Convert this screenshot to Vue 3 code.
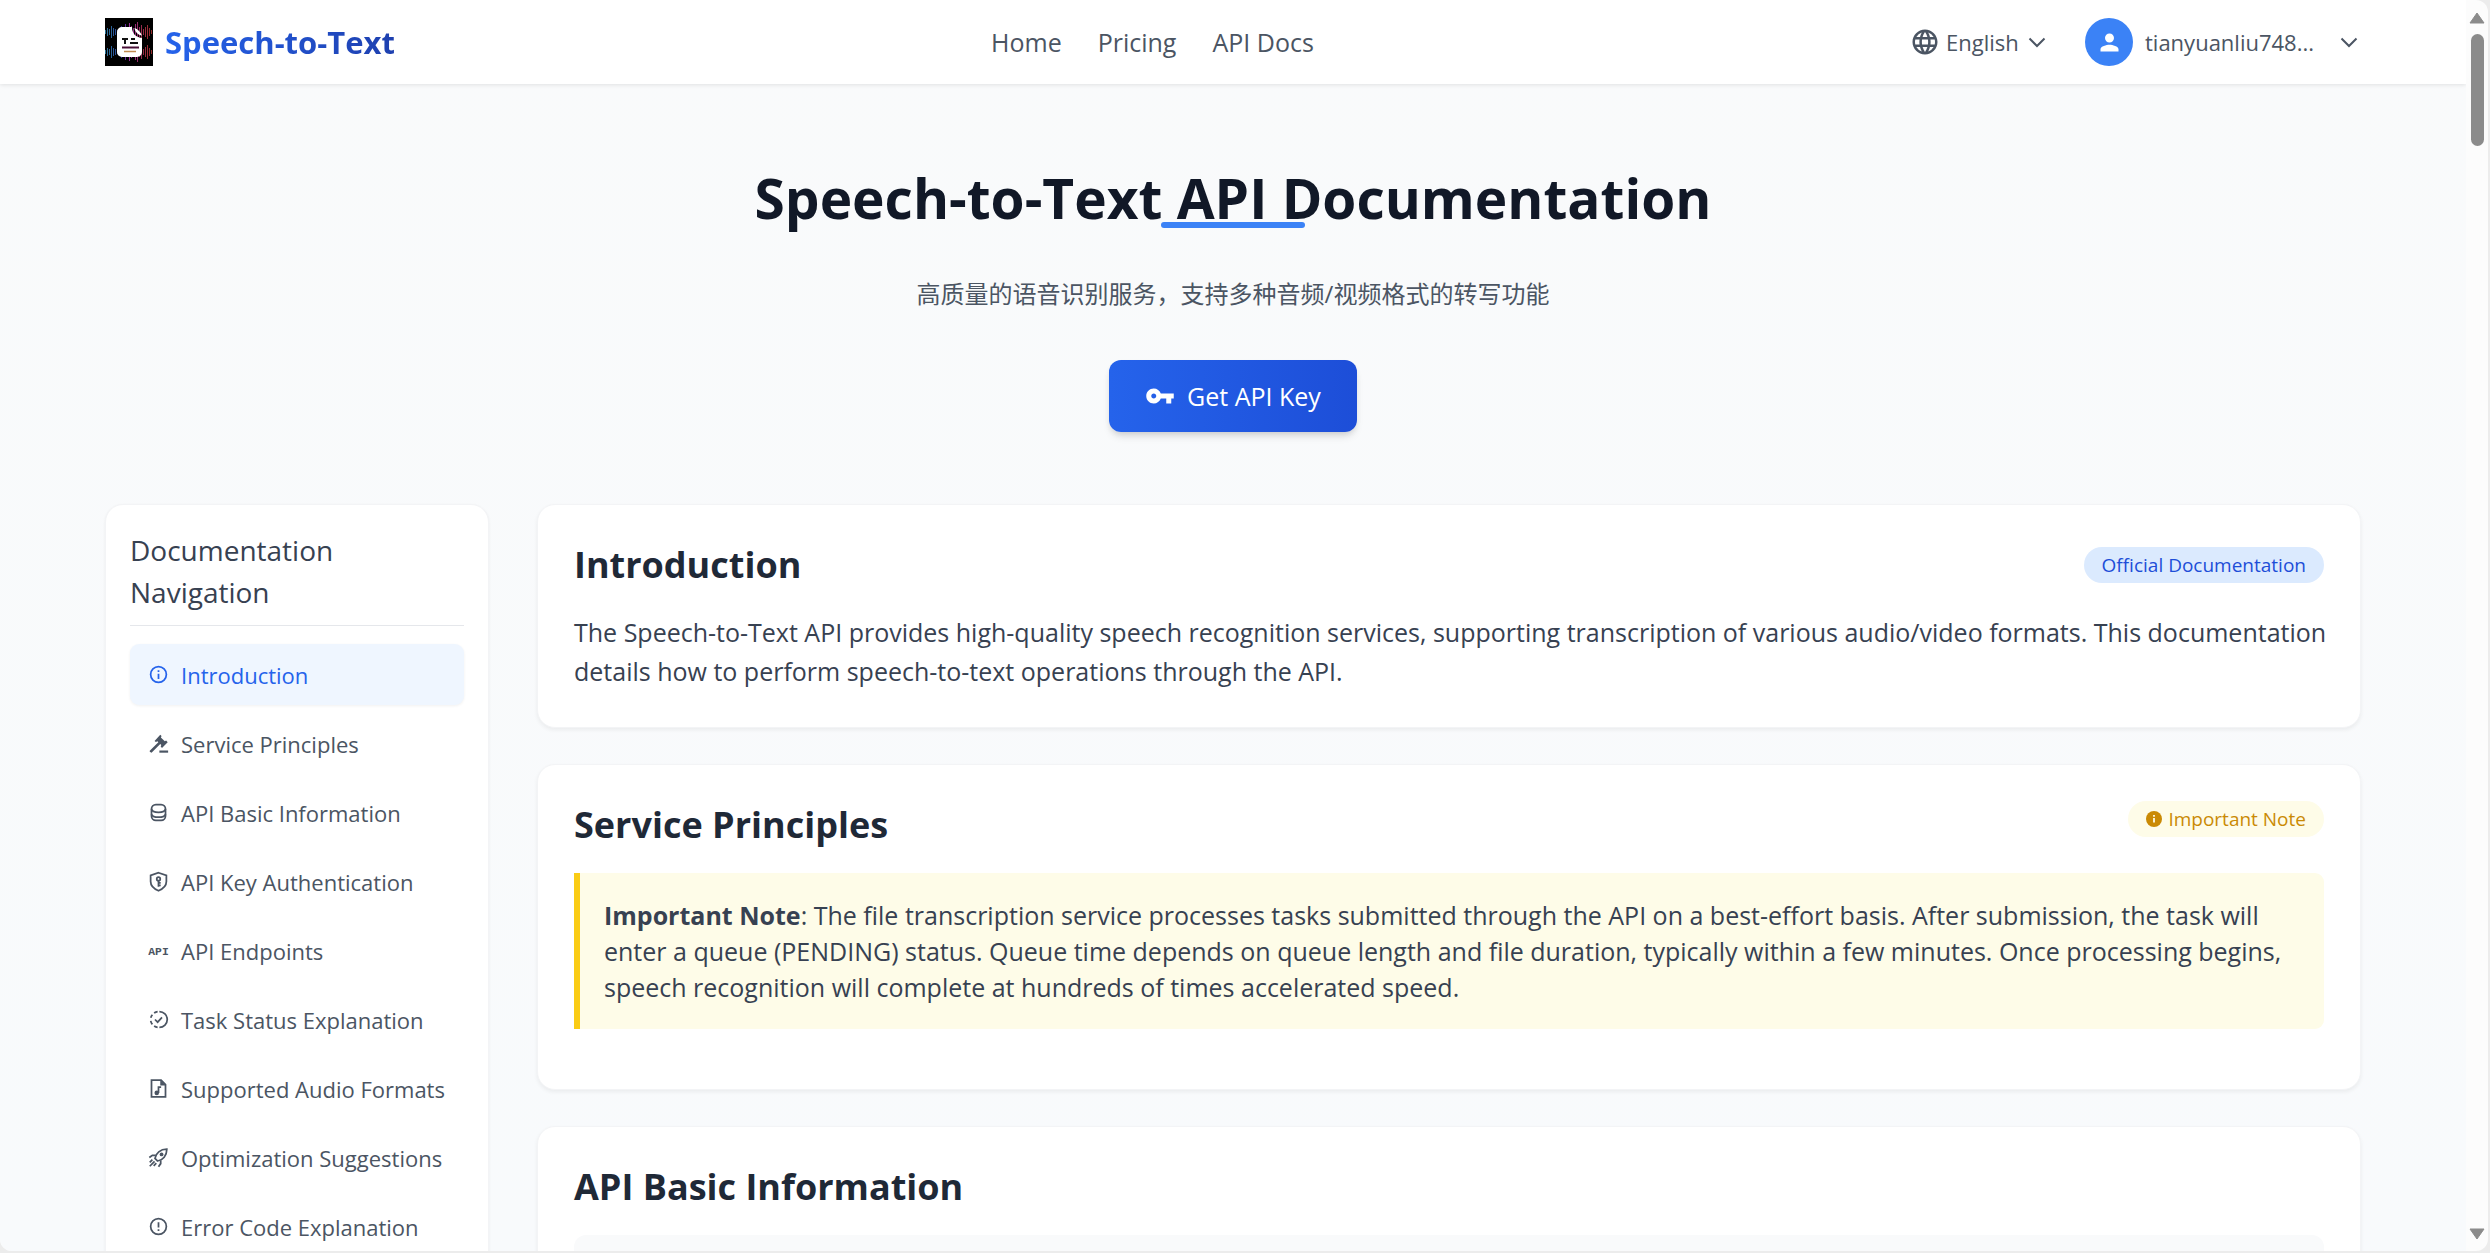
<script setup>
import { ref } from 'vue'

const active = ref('introduction')

const links = ['Home', 'Pricing', 'API Docs']

const sections = [
  { id: 'introduction', label: 'Introduction', icon: 'info' },
  { id: 'service-principles', label: 'Service Principles', icon: 'gavel' },
  { id: 'api-basic', label: 'API Basic Information', icon: 'database' },
  { id: 'api-key', label: 'API Key Authentication', icon: 'shield' },
  { id: 'api-endpoints', label: 'API Endpoints', icon: 'api' },
  { id: 'task-status', label: 'Task Status Explanation', icon: 'progress' },
  { id: 'audio-formats', label: 'Supported Audio Formats', icon: 'music' },
  { id: 'optimization', label: 'Optimization Suggestions', icon: 'rocket' },
  { id: 'error-codes', label: 'Error Code Explanation', icon: 'alert' }
]

// Waveform bars of the logo: two rows, blue at the left edge to red at the right edge
const heights = [2, 4, 3, 6, 4, 3, 2, 3, 6, 5, 8, 4, 9, 6, 4, 8, 10, 5, 7, 3, 5, 7, 4, 2]
const hues = [200, 203, 206, 210, 215, 220, 228, 236, 245, 255, 270, 385, 300, 305, 310, 318, 325, 332, 340, 346, 350, 354, 357, 360]
const bars = [14, 34].flatMap((y) =>
  heights.map((h, i) => ({ x: i * 2, y: y - h, h: h * 2, c: `hsl(${hues[i]}, 55%, 38%)` }))
)
</script>

<template>
  <div class="window">
    <div class="page">
      <header class="topbar">
        <div class="container topbar-row">
          <a class="brand" href="#">
            <svg class="logo" viewBox="0 0 48 48" aria-hidden="true">
              <rect width="48" height="48" fill="#000" />
              <rect v-for="(b, i) in bars" :key="i" :x="b.x" :y="b.y" width="1" :height="b.h" :fill="b.c" />
              <path d="M17 9h10c0 6 3 10 10 11v14a5 5 0 0 1-5 5H17a5 5 0 0 1-5-5V14a5 5 0 0 1 5-5z" fill="#fff" />
              <path d="M29.500 10c3 1 6 4 7.500 7.500-4-.5-7-3.500-7.500-7.500z" fill="#fff" />
              <path d="M17 21h6M20 21v5M26 21h4M25 25h8" stroke="#111" stroke-width="2" fill="none" />
              <path d="M17 29.500h17" stroke="#4a1038" stroke-width="2" />
              <path d="M19 33.500h12" stroke="#c08a50" stroke-width="1.500" />
            </svg>
            <span class="brand-name">Speech-to-Text</span>
          </a>

          <nav class="links" aria-label="Main">
            <a v-for="l in links" :key="l" href="#">{{ l }}</a>
          </nav>

          <div class="account">
            <label class="language">
              <svg class="globe" viewBox="0 0 24 24" fill="currentColor" aria-hidden="true">
                <path d="M11.99 2C6.47 2 2 6.480 2 12s4.470 10 9.990 10C17.520 22 22 17.520 22 12S17.520 2 11.990 2zm6.930 6h-2.950a15.650 15.650 0 0 0-1.380-3.560A8.030 8.030 0 0 1 18.920 8zM12 4.040c.83 1.200 1.480 2.530 1.910 3.960h-3.820c.43-1.430 1.080-2.760 1.910-3.960zM4.260 14C4.100 13.360 4 12.690 4 12s.1-1.360.26-2h3.380c-.08.66-.14 1.320-.14 2 0 .68.06 1.340.14 2H4.260zm.82 2h2.950c.32 1.250.78 2.450 1.380 3.560A7.987 7.987 0 0 1 5.080 16zm2.950-8H5.080a7.987 7.987 0 0 1 4.330-3.560A15.650 15.650 0 0 0 8.030 8zM12 19.960c-.83-1.200-1.480-2.530-1.910-3.960h3.820c-.43 1.430-1.080 2.760-1.910 3.960zM14.340 14H9.660c-.09-.66-.16-1.320-.16-2 0-.68.07-1.350.16-2h4.680c.09.65.16 1.320.16 2 0 .68-.07 1.340-.16 2zm.25 5.560c.6-1.110 1.060-2.310 1.380-3.560h2.950a8.030 8.030 0 0 1-4.330 3.560zM16.360 14c.08-.66.14-1.320.14-2 0-.68-.06-1.340-.14-2h3.380c.16.64.26 1.310.26 2s-.1 1.360-.26 2h-3.380z" />
              </svg>
              <select aria-label="Language">
                <option>English</option>
              </select>
              <svg class="chevron" viewBox="0 0 24 24" aria-hidden="true"><path d="M4.500 8.500 12 16l7.500-7.500" /></svg>
            </label>
            <button class="user" type="button">
              <span class="avatar">
                <svg viewBox="0 0 24 24" fill="currentColor" aria-hidden="true">
                  <path d="M12 12c2.210 0 4-1.790 4-4s-1.790-4-4-4-4 1.790-4 4 1.790 4 4 4zm0 2c-2.670 0-8 1.340-8 4v2h16v-2c0-2.660-5.330-4-8-4z" />
                </svg>
              </span>
              <span class="user-name">tianyuanliu748...</span>
              <svg class="chevron" viewBox="0 0 24 24" aria-hidden="true"><path d="M4.500 8.500 12 16l7.500-7.500" /></svg>
            </button>
          </div>
        </div>
      </header>

      <section class="hero">
        <h1>Speech-to-Text API Documentation</h1>
        <p>高质量的语音识别服务，支持多种音频/视频格式的转写功能</p>
        <button class="cta" type="button">
          <svg viewBox="0 0 24 24" fill="currentColor" aria-hidden="true">
            <path d="M12.650 10C11.830 7.670 9.610 6 7 6c-3.310 0-6 2.690-6 6s2.690 6 6 6c2.610 0 4.830-1.670 5.650-4H17v4h4v-4h2v-4H12.650zM7 14c-1.100 0-2-.9-2-2s.9-2 2-2 2 .9 2 2-.9 2-2 2z" />
          </svg>
          Get API Key
        </button>
      </section>

      <div class="container body-row">
        <aside class="sidebar">
          <h3>Documentation Navigation</h3>
          <nav aria-label="Documentation">
            <a
              v-for="s in sections"
              :key="s.id"
              :href="'#' + s.id"
              :class="{ active: active === s.id }"
              @click="active = s.id"
            >
              <svg class="icon" viewBox="0 0 24 24" aria-hidden="true">
                <template v-if="s.icon === 'info'">
                  <circle cx="12" cy="12" r="9" />
                  <path d="M12 11v6M12 7v2" />
                </template>
                <template v-else-if="s.icon === 'gavel'">
                  <path class="solid" d="M14 2l1.500 1.500-.8 1.500 4.500 4.500 1.500-.8L22.500 10.500 16 17l-1.500-1.500.7-1.700-1.200-1.200L4 22.500 2 21.500 2 20.300 11.800 10.500l-1-1-1.800.9L7.500 9z" />
                  <path class="solid" d="M13 20h10v2.500H13z" />
                </template>
                <template v-else-if="s.icon === 'database'">
                  <rect x="4" y="3" width="16" height="18" rx="5" />
                  <path d="M4 8c1 5 15 5 16 0M4 14c1 4.500 15 4.500 16 0" />
                </template>
                <template v-else-if="s.icon === 'shield'">
                  <path d="M12 2l9 3v7c0 5.500-4 8.500-9 10.500C7 20.500 3 17.500 3 12V5z" />
                  <circle cx="12" cy="9" r="2" />
                  <path d="M12 11v7M12 13.500h2.500M12 16.500h2.500" />
                </template>
                <text v-else-if="s.icon === 'api'" x="12" y="17" text-anchor="middle">API</text>
                <template v-else-if="s.icon === 'progress'">
                  <path d="M13 3a9 9 0 0 1 0 18" />
                  <path d="M11 3a9 9 0 0 0-4 1.600M5 6.500A9 9 0 0 0 3.200 10M3.100 13.500A9 9 0 0 0 5 17.600M7 19.500a9 9 0 0 0 4 1.500" />
                  <path d="M8 12l3 3 5-5.500" />
                </template>
                <template v-else-if="s.icon === 'music'">
                  <path d="M15 2.500H4v19h16V7.500z" />
                  <path class="solid" d="M14 2v6.500h6.500z" />
                  <path d="M12 17V10.500h3" />
                  <circle class="solid" cx="10" cy="17" r="2.600" />
                </template>
                <template v-else-if="s.icon === 'rocket'">
                  <path d="M8 13c1-6 6-10.500 13.500-10.500C21.500 10 17 15 11 16z" />
                  <circle class="solid" cx="15.500" cy="8.500" r="2.200" />
                  <path d="M9 9.500 5 9.500 1.500 12M14.500 15v4L12 22.500M5 14.500 2 17.500M7.500 16.500 2 22M9.500 18.500 6.500 21.500" />
                </template>
                <template v-else>
                  <circle cx="12" cy="12" r="9" />
                  <path d="M12 7v6M12 15v2" />
                </template>
              </svg>
              {{ s.label }}
            </a>
          </nav>
        </aside>

        <main class="content">
          <section id="introduction" class="card">
            <div class="card-head centered">
              <h2>Introduction</h2>
              <span class="badge blue">Official Documentation</span>
            </div>
            <p class="lead">
              The Speech-to-Text API provides high-quality speech recognition services, supporting transcription of
              various audio/video formats. This documentation details how to perform speech-to-text operations through
              the API.
            </p>
          </section>

          <section id="service-principles" class="card">
            <div class="card-head">
              <h2>Service Principles</h2>
              <span class="badge yellow">
                <svg viewBox="0 0 18 18" aria-hidden="true">
                  <circle cx="9" cy="9" r="9" fill="currentColor" />
                  <path d="M9 8v5M9 4.500v2" stroke="#fefce8" stroke-width="2" />
                </svg>
                Important Note
              </span>
            </div>
            <div class="note">
              <strong>Important Note</strong>: The file transcription service processes tasks submitted through the API
              on a best-effort basis. After submission, the task will enter a queue (PENDING) status. Queue time depends
              on queue length and file duration, typically within a few minutes. Once processing begins, speech
              recognition will complete at hundreds of times accelerated speed.
            </div>
          </section>

          <section id="api-basic" class="card">
            <div class="card-head">
              <h2>API Basic Information</h2>
            </div>
            <div class="panel"></div>
          </section>
        </main>
      </div>
    </div>

    <div class="scrollbar" aria-hidden="true">
      <svg viewBox="0 0 16 12"><path d="M8 1 15 11H1z" /></svg>
      <div class="thumb"></div>
      <svg class="down" viewBox="0 0 16 12"><path d="M8 11 15 1H1z" /></svg>
    </div>
  </div>
</template>

<style>
body {
  margin: 0;
  background: #ececec;
}
</style>

<style scoped>
* {
  box-sizing: border-box;
}

.window {
  display: flex;
  height: calc(100vh - 2px);
  margin-right: 2px;
  overflow: hidden;
  border-radius: 0 12px 12px 12px;
  background: #fcfcfc;
  font-family: 'Open Sans', 'Noto Sans', 'Noto Sans CJK SC', sans-serif;
  font-size: 25px;
  color: #374151;
}

.page {
  flex: 1;
  min-width: 0;
  overflow: hidden;
  background: linear-gradient(#f9fafb, #f8fafc);
}

a {
  color: inherit;
  text-decoration: none;
}

button,
select {
  margin: 0;
  padding: 0;
  border: 0;
  background: none;
  color: inherit;
  font: inherit;
  cursor: pointer;
}

h1,
h2,
h3,
p {
  margin: 0;
}

.container {
  max-width: 2304px;
  margin: 0 auto;
  padding: 0 24px;
}

.topbar {
  position: relative;
  background: #fff;
  box-shadow: 0 1px 4px rgba(0, 0, 0, 0.1);
}

.topbar-row {
  display: flex;
  align-items: center;
  justify-content: space-between;
  height: 84px;
}

.brand {
  display: flex;
  align-items: center;
  gap: 12px;
}

.logo {
  width: 48px;
  height: 48px;
}

.brand-name {
  background: linear-gradient(90deg, #2563eb, #1e40af);
  background-clip: text;
  color: transparent;
  font-size: 31px;
  font-weight: 700;
  line-height: 42px;
}

.links {
  display: flex;
  gap: 36px;
  color: #4b5563;
  line-height: 36px;
}

.account {
  display: flex;
  align-items: center;
  gap: 36px;
  color: #4b5563;
  font-size: 22px;
}

.language {
  display: flex;
  align-items: center;
  gap: 6px;
}

.language select {
  appearance: none;
}

.globe {
  width: 30px;
  height: 30px;
}

.chevron {
  width: 24px;
  height: 24px;
  fill: none;
  stroke: currentColor;
  stroke-width: 2;
}

.user {
  display: flex;
  align-items: center;
  gap: 12px;
}

.avatar {
  display: flex;
  align-items: center;
  justify-content: center;
  width: 48px;
  height: 48px;
  border-radius: 50%;
  background: #3b82f6;
  color: #fff;
}

.avatar svg {
  width: 27px;
  height: 27px;
}

.user-name {
  width: 180px;
  text-align: left;
}

.hero {
  display: flex;
  flex-direction: column;
  align-items: center;
  padding: 72px 24px;
  text-align: center;
}

.hero h1 {
  position: relative;
  margin-bottom: 36px;
  color: #111827;
  font-size: 55px;
  font-weight: 700;
  line-height: 84px;
}

.hero h1::after {
  content: '';
  position: absolute;
  bottom: 12px;
  left: 50%;
  width: 144px;
  height: 6px;
  margin-left: -72px;
  border-radius: 3px;
  background: #3b82f6;
}

.hero p {
  margin-bottom: 48px;
  color: #4b5563;
  font-size: 24px;
  line-height: 36px;
}

.cta {
  display: flex;
  align-items: center;
  gap: 12px;
  height: 72px;
  padding: 0 36px;
  border-radius: 12px;
  background: linear-gradient(90deg, #2563eb, #1d4ed8);
  box-shadow: 0 6px 9px -2px rgba(0, 0, 0, 0.12), 0 3px 6px -2px rgba(0, 0, 0, 0.1);
  color: #fff;
  font-weight: 500;
  line-height: 36px;
}

.cta svg {
  width: 30px;
  height: 30px;
}

.body-row {
  display: flex;
  align-items: flex-start;
  gap: 48px;
}

.sidebar {
  flex: 0 0 384px;
  padding: 24px;
  border: 1px solid #f3f4f6;
  border-radius: 18px;
  background: #fff;
  box-shadow: 0 1px 3px rgba(0, 0, 0, 0.06);
}

.sidebar h3 {
  margin-bottom: 18px;
  padding-bottom: 12px;
  border-bottom: 1px solid #e5e7eb;
  font-size: 28px;
  font-weight: 400;
  line-height: 42px;
}

.sidebar nav {
  display: flex;
  flex-direction: column;
  gap: 8px;
}

.sidebar a {
  display: flex;
  align-items: center;
  gap: 12px;
  height: 61px;
  padding: 0 18px;
  border-radius: 9px;
  color: #4b5563;
  font-size: 22px;
  white-space: nowrap;
}

.sidebar a.active {
  background: #eff6ff;
  box-shadow: 0 1px 3px rgba(0, 0, 0, 0.06);
  color: #2563eb;
}

.icon {
  flex: none;
  width: 21px;
  height: 21px;
  fill: none;
  stroke: currentColor;
  stroke-width: 2;
}

.icon .solid {
  fill: currentColor;
  stroke: none;
}

.icon text {
  fill: currentColor;
  stroke: none;
  font: 700 13px 'Liberation Mono', monospace;
}

.content {
  display: flex;
  flex: 1;
  flex-direction: column;
  gap: 36px;
  min-width: 0;
}

.card {
  padding: 36px;
  border: 1px solid #f3f4f6;
  border-radius: 18px;
  background: #fff;
  box-shadow: 0 2px 4px rgba(0, 0, 0, 0.06);
}

.card-head {
  display: flex;
  align-items: flex-start;
  justify-content: space-between;
  margin-bottom: 24px;
}

.card-head.centered {
  align-items: center;
}

.card h2 {
  color: #1f2937;
  font-size: 36px;
  font-weight: 700;
  line-height: 48px;
}

.badge {
  display: flex;
  align-items: center;
  gap: 6px;
  height: 36px;
  padding: 0 18px;
  border-radius: 18px;
  font-size: 19px;
}

.badge svg {
  width: 16px;
  height: 16px;
}

.badge.blue {
  background: #dbeafe;
  color: #1d4ed8;
}

.badge.yellow {
  background: #fefce8;
  color: #ca8a04;
}

.lead {
  margin-right: -12px;
  line-height: 39px;
}

.note {
  margin-bottom: 24px;
  padding: 24px;
  border-left: 6px solid #facc15;
  border-radius: 0 9px 9px 0;
  background: #fefce8;
  line-height: 36px;
}

.panel {
  height: 320px;
  border-radius: 12px;
  background: #f9fafb;
}

.scrollbar {
  display: flex;
  flex: 0 0 22px;
  flex-direction: column;
  align-items: center;
  gap: 10px;
  padding: 12px 0 11px;
}

.scrollbar svg {
  width: 16px;
  height: 12px;
  fill: #8b8b8b;
  stroke: #8b8b8b;
  stroke-linejoin: round;
}

.scrollbar .down {
  margin-top: auto;
}

.thumb {
  width: 13px;
  height: 112px;
  border-radius: 7px;
  background: #8b8b8b;
}
</style>
